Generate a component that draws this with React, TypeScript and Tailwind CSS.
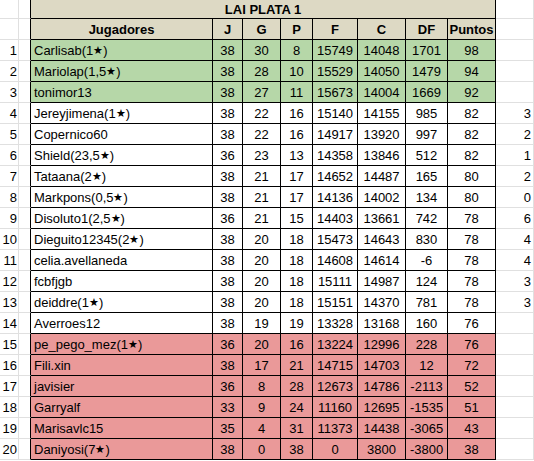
import React from "react";

type Row = {
  n: number;
  name: string;
  v: (string | number)[];
  extra?: string;
  bg: string;
};

const GREEN = "bg-[#b6d7a8]";
const RED = "bg-[#ea9999]";
const WHITE = "bg-white";

const rows: Row[] = [
  { n: 1, name: "Carlisab(1★)", v: [38, 30, 8, 15749, 14048, 1701, 98], bg: GREEN },
  { n: 2, name: "Mariolap(1,5★)", v: [38, 28, 10, 15529, 14050, 1479, 94], bg: GREEN },
  { n: 3, name: "tonimor13", v: [38, 27, 11, 15673, 14004, 1669, 92], bg: GREEN },
  { n: 4, name: "Jereyjimena(1★)", v: [38, 22, 16, 15140, 14155, 985, 82], extra: "3", bg: WHITE },
  { n: 5, name: "Copernico60", v: [38, 22, 16, 14917, 13920, 997, 82], extra: "2", bg: WHITE },
  { n: 6, name: "Shield(23,5★)", v: [36, 23, 13, 14358, 13846, 512, 82], extra: "1", bg: WHITE },
  { n: 7, name: "Tataana(2★)", v: [38, 21, 17, 14652, 14487, 165, 80], extra: "2", bg: WHITE },
  { n: 8, name: "Markpons(0,5★)", v: [38, 21, 17, 14136, 14002, 134, 80], extra: "0", bg: WHITE },
  { n: 9, name: "Disoluto1(2,5★)", v: [36, 21, 15, 14403, 13661, 742, 78], extra: "6", bg: WHITE },
  { n: 10, name: "Dieguito12345(2★)", v: [38, 20, 18, 15473, 14643, 830, 78], extra: "4", bg: WHITE },
  { n: 11, name: "celia.avellaneda", v: [38, 20, 18, 14608, 14614, -6, 78], extra: "4", bg: WHITE },
  { n: 12, name: "fcbfjgb", v: [38, 20, 18, 15111, 14987, 124, 78], extra: "3", bg: WHITE },
  { n: 13, name: "deiddre(1★)", v: [38, 20, 18, 15151, 14370, 781, 78], extra: "3", bg: WHITE },
  { n: 14, name: "Averroes12", v: [38, 19, 19, 13328, 13168, 160, 76], bg: WHITE },
  { n: 15, name: "pe_pego_mez(1★)", v: [36, 20, 16, 13224, 12996, 228, 76], bg: RED },
  { n: 16, name: "Fili.xin", v: [38, 17, 21, 14715, 14703, 12, 72], bg: RED },
  { n: 17, name: "javisier", v: [36, 8, 28, 12673, 14786, -2113, 52], bg: RED },
  { n: 18, name: "Garryalf", v: [33, 9, 24, 11160, 12695, -1535, 51], bg: RED },
  { n: 19, name: "Marisavlc15", v: [35, 4, 31, 11373, 14438, -3065, 43], bg: RED },
  { n: 20, name: "Daniyosi(7★)", v: [38, 0, 38, 0, 3800, -3800, 38], bg: RED },
];

const numW = ["w-[30px]", "w-[38px]", "w-[32px]", "w-[45px]", "w-[48px]", "w-[42px]", "w-[48px]"];
const heads = ["J", "G", "P", "F", "C", "DF", "Puntos"];

function Name({ text }: { text: string }) {
  const parts = text.split("★");
  return (
    <>
      {parts.map((p, i) => (
        <React.Fragment key={i}>
          {p}
          {i < parts.length - 1 && <span className="text-[10.5px]">★</span>}
        </React.Fragment>
      ))}
    </>
  );
}

function Gutter({ label }: { label?: string | number }) {
  return (
    <>
      <div className="w-[19px] shrink-0 h-full border-r border-b border-[#e0e0e0] bg-white flex items-center justify-end pr-[1px]">
        {label}
      </div>
      <div className="w-[12px] shrink-0 h-full border-r border-r-black border-b border-b-[#e0e0e0] bg-white" />
    </>
  );
}

function RightCell({ label }: { label?: string }) {
  return (
    <div className="w-[38px] shrink-0 h-full border-r border-b border-[#e0e0e0] bg-white flex items-center justify-end pr-[2px]">
      {label}
    </div>
  );
}

export default function App() {
  return (
    <div
      className="w-[534px] h-[461px] bg-white text-[13px] text-black overflow-hidden leading-none"
      style={{ fontFamily: '"Liberation Sans", Arial, sans-serif' }}
    >
      <div className="flex h-[19px]">
        <Gutter />
        <div className="w-[465px] shrink-0 h-full border-r border-b border-black bg-[#ddd9c4] flex items-center justify-center font-bold">
          LAI PLATA 1
        </div>
        <RightCell />
      </div>
      <div className="flex h-[21px]">
        <Gutter />
        <div className="w-[182px] shrink-0 h-full border-r border-b border-black bg-[#ddd9c4] flex items-center justify-center font-bold">
          Jugadores
        </div>
        {heads.map((h, i) => (
          <div
            key={h}
            className={`${numW[i]} shrink-0 h-full border-r border-b border-black bg-[#ddd9c4] flex items-center justify-center font-bold`}
          >
            {h}
          </div>
        ))}
        <RightCell />
      </div>
      {rows.map((r) => (
        <div key={r.n} className="flex h-[21px]">
          <Gutter label={r.n} />
          <div className={`w-[182px] shrink-0 h-full border-r border-b border-black ${r.bg} flex items-center pl-[3px] whitespace-nowrap`}>
            <Name text={r.name} />
          </div>
          {r.v.map((val, i) => (
            <div
              key={i}
              className={`${numW[i]} shrink-0 h-full border-r border-b border-black ${r.bg} flex items-center justify-center`}
            >
              {val}
            </div>
          ))}
          <RightCell label={r.extra} />
        </div>
      ))}
    </div>
  );
}
